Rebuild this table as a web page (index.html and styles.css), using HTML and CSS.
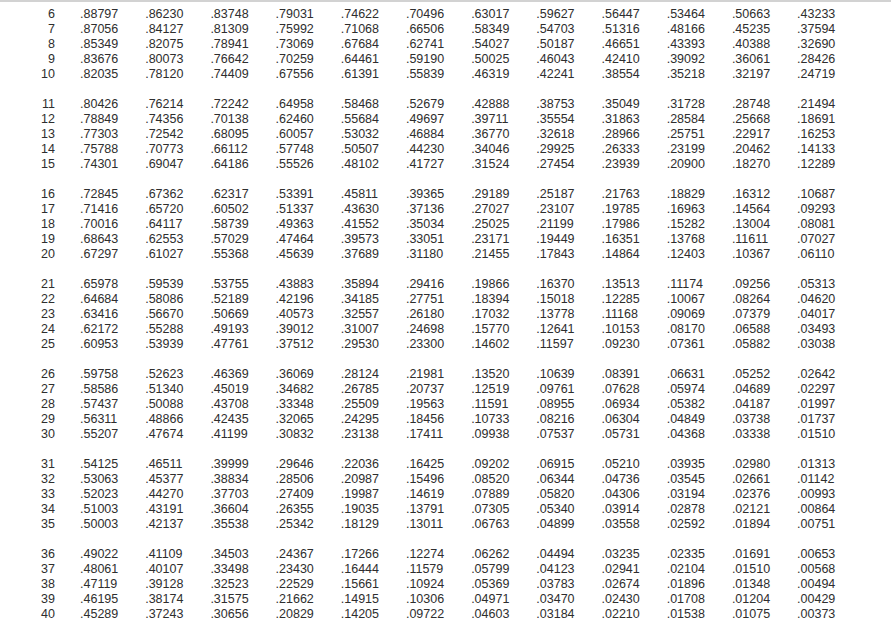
FILE: index.html
```html
<!DOCTYPE html>
<html>
<head>
<meta charset="utf-8">
<link rel="stylesheet" href="styles.css">
</head>
<body>
<div class="page">
<div class="group">
<div class="row"><span class="n">6</span><span>.88797</span><span>.86230</span><span>.83748</span><span>.79031</span><span>.74622</span><span>.70496</span><span>.63017</span><span>.59627</span><span>.56447</span><span>.53464</span><span>.50663</span><span>.43233</span></div>
<div class="row"><span class="n">7</span><span>.87056</span><span>.84127</span><span>.81309</span><span>.75992</span><span>.71068</span><span>.66506</span><span>.58349</span><span>.54703</span><span>.51316</span><span>.48166</span><span>.45235</span><span>.37594</span></div>
<div class="row"><span class="n">8</span><span>.85349</span><span>.82075</span><span>.78941</span><span>.73069</span><span>.67684</span><span>.62741</span><span>.54027</span><span>.50187</span><span>.46651</span><span>.43393</span><span>.40388</span><span>.32690</span></div>
<div class="row"><span class="n">9</span><span>.83676</span><span>.80073</span><span>.76642</span><span>.70259</span><span>.64461</span><span>.59190</span><span>.50025</span><span>.46043</span><span>.42410</span><span>.39092</span><span>.36061</span><span>.28426</span></div>
<div class="row"><span class="n">10</span><span>.82035</span><span>.78120</span><span>.74409</span><span>.67556</span><span>.61391</span><span>.55839</span><span>.46319</span><span>.42241</span><span>.38554</span><span>.35218</span><span>.32197</span><span>.24719</span></div>
</div>
<div class="group">
<div class="row"><span class="n">11</span><span>.80426</span><span>.76214</span><span>.72242</span><span>.64958</span><span>.58468</span><span>.52679</span><span>.42888</span><span>.38753</span><span>.35049</span><span>.31728</span><span>.28748</span><span>.21494</span></div>
<div class="row"><span class="n">12</span><span>.78849</span><span>.74356</span><span>.70138</span><span>.62460</span><span>.55684</span><span>.49697</span><span>.39711</span><span>.35554</span><span>.31863</span><span>.28584</span><span>.25668</span><span>.18691</span></div>
<div class="row"><span class="n">13</span><span>.77303</span><span>.72542</span><span>.68095</span><span>.60057</span><span>.53032</span><span>.46884</span><span>.36770</span><span>.32618</span><span>.28966</span><span>.25751</span><span>.22917</span><span>.16253</span></div>
<div class="row"><span class="n">14</span><span>.75788</span><span>.70773</span><span>.66112</span><span>.57748</span><span>.50507</span><span>.44230</span><span>.34046</span><span>.29925</span><span>.26333</span><span>.23199</span><span>.20462</span><span>.14133</span></div>
<div class="row"><span class="n">15</span><span>.74301</span><span>.69047</span><span>.64186</span><span>.55526</span><span>.48102</span><span>.41727</span><span>.31524</span><span>.27454</span><span>.23939</span><span>.20900</span><span>.18270</span><span>.12289</span></div>
</div>
<div class="group">
<div class="row"><span class="n">16</span><span>.72845</span><span>.67362</span><span>.62317</span><span>.53391</span><span>.45811</span><span>.39365</span><span>.29189</span><span>.25187</span><span>.21763</span><span>.18829</span><span>.16312</span><span>.10687</span></div>
<div class="row"><span class="n">17</span><span>.71416</span><span>.65720</span><span>.60502</span><span>.51337</span><span>.43630</span><span>.37136</span><span>.27027</span><span>.23107</span><span>.19785</span><span>.16963</span><span>.14564</span><span>.09293</span></div>
<div class="row"><span class="n">18</span><span>.70016</span><span>.64117</span><span>.58739</span><span>.49363</span><span>.41552</span><span>.35034</span><span>.25025</span><span>.21199</span><span>.17986</span><span>.15282</span><span>.13004</span><span>.08081</span></div>
<div class="row"><span class="n">19</span><span>.68643</span><span>.62553</span><span>.57029</span><span>.47464</span><span>.39573</span><span>.33051</span><span>.23171</span><span>.19449</span><span>.16351</span><span>.13768</span><span>.11611</span><span>.07027</span></div>
<div class="row"><span class="n">20</span><span>.67297</span><span>.61027</span><span>.55368</span><span>.45639</span><span>.37689</span><span>.31180</span><span>.21455</span><span>.17843</span><span>.14864</span><span>.12403</span><span>.10367</span><span>.06110</span></div>
</div>
<div class="group">
<div class="row"><span class="n">21</span><span>.65978</span><span>.59539</span><span>.53755</span><span>.43883</span><span>.35894</span><span>.29416</span><span>.19866</span><span>.16370</span><span>.13513</span><span>.11174</span><span>.09256</span><span>.05313</span></div>
<div class="row"><span class="n">22</span><span>.64684</span><span>.58086</span><span>.52189</span><span>.42196</span><span>.34185</span><span>.27751</span><span>.18394</span><span>.15018</span><span>.12285</span><span>.10067</span><span>.08264</span><span>.04620</span></div>
<div class="row"><span class="n">23</span><span>.63416</span><span>.56670</span><span>.50669</span><span>.40573</span><span>.32557</span><span>.26180</span><span>.17032</span><span>.13778</span><span>.11168</span><span>.09069</span><span>.07379</span><span>.04017</span></div>
<div class="row"><span class="n">24</span><span>.62172</span><span>.55288</span><span>.49193</span><span>.39012</span><span>.31007</span><span>.24698</span><span>.15770</span><span>.12641</span><span>.10153</span><span>.08170</span><span>.06588</span><span>.03493</span></div>
<div class="row"><span class="n">25</span><span>.60953</span><span>.53939</span><span>.47761</span><span>.37512</span><span>.29530</span><span>.23300</span><span>.14602</span><span>.11597</span><span>.09230</span><span>.07361</span><span>.05882</span><span>.03038</span></div>
</div>
<div class="group">
<div class="row"><span class="n">26</span><span>.59758</span><span>.52623</span><span>.46369</span><span>.36069</span><span>.28124</span><span>.21981</span><span>.13520</span><span>.10639</span><span>.08391</span><span>.06631</span><span>.05252</span><span>.02642</span></div>
<div class="row"><span class="n">27</span><span>.58586</span><span>.51340</span><span>.45019</span><span>.34682</span><span>.26785</span><span>.20737</span><span>.12519</span><span>.09761</span><span>.07628</span><span>.05974</span><span>.04689</span><span>.02297</span></div>
<div class="row"><span class="n">28</span><span>.57437</span><span>.50088</span><span>.43708</span><span>.33348</span><span>.25509</span><span>.19563</span><span>.11591</span><span>.08955</span><span>.06934</span><span>.05382</span><span>.04187</span><span>.01997</span></div>
<div class="row"><span class="n">29</span><span>.56311</span><span>.48866</span><span>.42435</span><span>.32065</span><span>.24295</span><span>.18456</span><span>.10733</span><span>.08216</span><span>.06304</span><span>.04849</span><span>.03738</span><span>.01737</span></div>
<div class="row"><span class="n">30</span><span>.55207</span><span>.47674</span><span>.41199</span><span>.30832</span><span>.23138</span><span>.17411</span><span>.09938</span><span>.07537</span><span>.05731</span><span>.04368</span><span>.03338</span><span>.01510</span></div>
</div>
<div class="group">
<div class="row"><span class="n">31</span><span>.54125</span><span>.46511</span><span>.39999</span><span>.29646</span><span>.22036</span><span>.16425</span><span>.09202</span><span>.06915</span><span>.05210</span><span>.03935</span><span>.02980</span><span>.01313</span></div>
<div class="row"><span class="n">32</span><span>.53063</span><span>.45377</span><span>.38834</span><span>.28506</span><span>.20987</span><span>.15496</span><span>.08520</span><span>.06344</span><span>.04736</span><span>.03545</span><span>.02661</span><span>.01142</span></div>
<div class="row"><span class="n">33</span><span>.52023</span><span>.44270</span><span>.37703</span><span>.27409</span><span>.19987</span><span>.14619</span><span>.07889</span><span>.05820</span><span>.04306</span><span>.03194</span><span>.02376</span><span>.00993</span></div>
<div class="row"><span class="n">34</span><span>.51003</span><span>.43191</span><span>.36604</span><span>.26355</span><span>.19035</span><span>.13791</span><span>.07305</span><span>.05340</span><span>.03914</span><span>.02878</span><span>.02121</span><span>.00864</span></div>
<div class="row"><span class="n">35</span><span>.50003</span><span>.42137</span><span>.35538</span><span>.25342</span><span>.18129</span><span>.13011</span><span>.06763</span><span>.04899</span><span>.03558</span><span>.02592</span><span>.01894</span><span>.00751</span></div>
</div>
<div class="group">
<div class="row"><span class="n">36</span><span>.49022</span><span>.41109</span><span>.34503</span><span>.24367</span><span>.17266</span><span>.12274</span><span>.06262</span><span>.04494</span><span>.03235</span><span>.02335</span><span>.01691</span><span>.00653</span></div>
<div class="row"><span class="n">37</span><span>.48061</span><span>.40107</span><span>.33498</span><span>.23430</span><span>.16444</span><span>.11579</span><span>.05799</span><span>.04123</span><span>.02941</span><span>.02104</span><span>.01510</span><span>.00568</span></div>
<div class="row"><span class="n">38</span><span>.47119</span><span>.39128</span><span>.32523</span><span>.22529</span><span>.15661</span><span>.10924</span><span>.05369</span><span>.03783</span><span>.02674</span><span>.01896</span><span>.01348</span><span>.00494</span></div>
<div class="row"><span class="n">39</span><span>.46195</span><span>.38174</span><span>.31575</span><span>.21662</span><span>.14915</span><span>.10306</span><span>.04971</span><span>.03470</span><span>.02430</span><span>.01708</span><span>.01204</span><span>.00429</span></div>
<div class="row"><span class="n">40</span><span>.45289</span><span>.37243</span><span>.30656</span><span>.20829</span><span>.14205</span><span>.09722</span><span>.04603</span><span>.03184</span><span>.02210</span><span>.01538</span><span>.01075</span><span>.00373</span></div>
</div>
</div>
</body>
</html>
```

FILE: styles.css
```css
html, body {
  margin: 0;
  padding: 0;
  background: #ffffff;
}

body {
  font-family: "Liberation Sans", Arial, sans-serif;
  font-size: 12.5px;
  color: #2e2e2e;
}

.page {
  border-top: 2px solid #d2d2d2;
  padding-top: 5px;
  width: 891px;
  height: 627px;
  overflow: hidden;
}

.group {
  display: flex;
  flex-direction: column;
  margin-bottom: 15px;
}

.row {
  display: grid;
  grid-template-columns: 55px repeat(12, 65.2px);
  height: 15px;
  line-height: 15px;
  white-space: nowrap;
}

.row span {
  padding-left: 25px;
}

.row .n {
  padding-left: 0;
  text-align: right;
}
```
